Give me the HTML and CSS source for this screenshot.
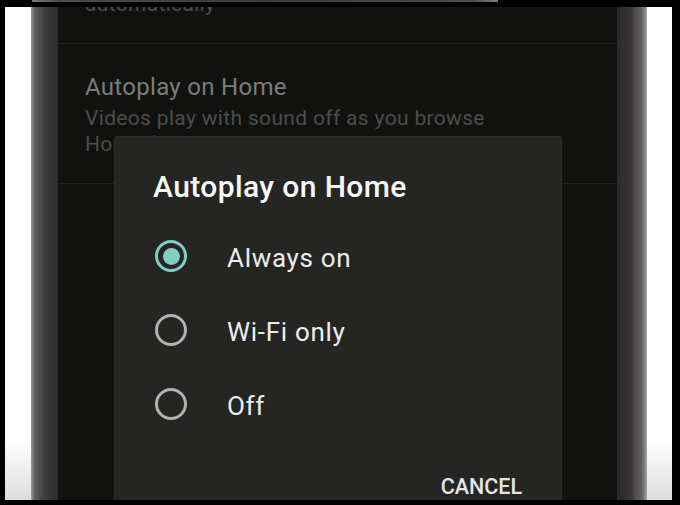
FILE: index.html
```html
<!DOCTYPE html>
<html>
<head>
<meta charset="utf-8">
<link rel="stylesheet" href="styles.css">
</head>
<body>
<div class="page">
  <div class="topband"><div class="peek"></div></div>
  <div class="stage">
    <div class="side side-left"></div>
    <div class="bezel bezel-left"></div>
    <div class="screen">
      <div class="item item-first">
        <div class="sub">automatically</div>
      </div>
      <div class="item item-second">
        <div class="title">Autoplay on Home</div>
        <div class="sub">Videos play with sound off as you browse<br>Home feed</div>
      </div>
      <div class="dialog">
        <div class="dlg-title">Autoplay on Home</div>
        <div class="options">
          <div class="option">
            <span class="radio checked"><span class="dot"></span></span>
            <span class="label">Always on</span>
          </div>
          <div class="option">
            <span class="radio"></span>
            <span class="label">Wi-Fi only</span>
          </div>
          <div class="option">
            <span class="radio"></span>
            <span class="label">Off</span>
          </div>
        </div>
        <div class="actions"><span class="btn">CANCEL</span></div>
      </div>
    </div>
    <div class="bezel bezel-right"></div>
    <div class="side side-right"></div>
  </div>
</div>
</body>
</html>
```
FILE: styles.css
```css
* { box-sizing: border-box; }
html, body { margin: 0; padding: 0; background: #000; }
body { width: 680px; height: 505px; overflow: hidden; font-family: Roboto, "Noto Sans", sans-serif; }

.page {
  width: 680px;
  height: 505px;
  padding: 0 8px 5px 5px;
  display: flex;
  flex-direction: column;
}
.topband { height: 7px; flex: none; }
.peek { margin-left: 27px; width: 466px; height: 2px; background: linear-gradient(90deg, #7a7a7a, #4a4a4a 6%, #3a3a3a 50%, #4a4a4a 94%, #7a7a7a); }

.stage {
  flex: 1;
  display: flex;
  overflow: hidden;
}
.side { height: 100%; background: linear-gradient(180deg, #ffffff 0, #ffffff 88%, #dcdcdc 100%); }
.side-left { width: 26px; }
.side-right { width: 25px; }
.bezel-left {
  width: 27px;
  background: linear-gradient(90deg, #9a9a9a 0, #7a7879 2px, #5e5b5d 4px, #4a4749 10px, #3d3a3c 14px, #363335 20px, #2e2c2d 27px);
}
.bezel-right {
  width: 30px;
  background: linear-gradient(90deg, #2a282a 0, #343133 10px, #3c393b 15px, #535052 19px, #5e5b5d 24px, #7a7879 27px, #a5a5a5 30px);
}

.screen {
  width: 559px;
  height: 100%;
  background: #111210;
  position: relative;
  overflow: hidden;
}
.item { border-bottom: 1px solid #232422; padding-left: 27px; }
.item-first {
  height: 37px;
  display: flex;
  align-items: flex-end;
  padding-bottom: 27px;
}
.item-second { padding-top: 28px; padding-bottom: 26px; }
.title { font-size: 24px; line-height: 30px; color: #7b7c7a; letter-spacing: 0.3px; }
.sub { font-size: 21px; line-height: 26px; color: #4c4d4b; margin-top: 3px; white-space: nowrap; letter-spacing: 0.33px; }
.item-first .sub { margin-top: 0; line-height: 24px; }

.dialog {
  position: absolute;
  left: 57px;
  top: 130px;
  width: 446px;
  height: 400px;
  background: #252624;
  border-radius: 2px;
  box-shadow: 0 0 0 1px #2b2c2a;
  padding: 33px 38px 0 38px;
}
.dlg-title {
  font-size: 30px;
  line-height: 34px;
  font-weight: 500;
  color: #f7f7f7;
  letter-spacing: 0.4px;
}
.options { margin-top: 15px; }
.option {
  height: 74px;
  display: flex;
  align-items: center;
}
.radio {
  width: 32px;
  height: 32px;
  margin-left: 2px;
  border-radius: 50%;
  border: 3px solid #b2b2b0;
  display: flex;
  align-items: center;
  justify-content: center;
  flex: none;
}
.radio.checked { border-color: #7fcdc3; }
.dot { width: 17px; height: 17px; border-radius: 50%; background: #7fcdc3; }
.label {
  margin-left: 40px;
  font-size: 26px;
  line-height: 30px;
  color: #ededed;
  padding-top: 4px;
  letter-spacing: 0.7px;
}
.actions {
  margin-top: 33px;
  display: flex;
  justify-content: flex-end;
  padding-right: 1px;
}
.btn {
  font-size: 21.5px;
  line-height: 26px;
  font-weight: 500;
  color: #e4e4e4;
}
```
